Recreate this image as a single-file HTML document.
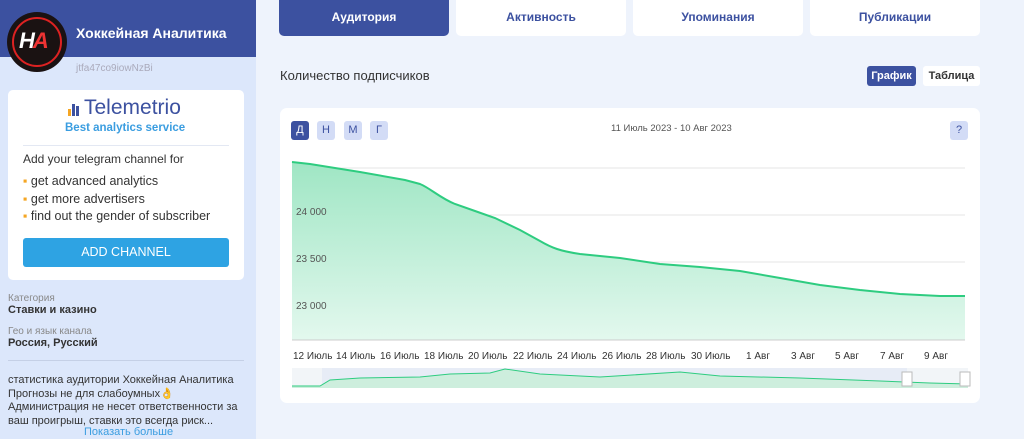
<!DOCTYPE html>
<html><head><meta charset="utf-8"><style>
body{margin:0;width:1024px;height:439px;overflow:hidden;background:#eef3fc;font-family:"Liberation Sans",sans-serif;position:relative}
.sb{position:absolute;left:0;top:0;width:256px;height:439px;background:#dce7fb}
.hd{position:absolute;left:0;top:0;width:256px;height:57px;background:#3c51a0}
.av{position:absolute;left:7px;top:12px;width:60px;height:60px;border-radius:50%;background:#1a1212;border:0}
.av:after{content:"";position:absolute;left:5px;top:5px;width:46px;height:46px;border-radius:50%;border:2px solid #d22}
.av span{position:absolute;left:12px;top:16px;color:#fff;font:italic bold 22px "Liberation Sans";letter-spacing:-2px}
.av span b{color:#e33}
.t{position:absolute;color:#333;font-size:12px}
.card{position:absolute;left:8px;top:90px;width:236px;height:190px;background:#fff;border-radius:5px}
.tab{position:absolute;top:0;height:36px;background:#fff;border-radius:0 0 5px 5px;color:#3c51a0;font-size:12px;font-weight:bold;text-align:center;line-height:34px}
.btn{position:absolute;width:18px;height:19px;border-radius:3px;background:#d3dcf6;color:#3c51a0;font-size:11px;text-align:center;line-height:19px}
</style></head><body>
<div class="sb"></div><div class="hd"></div>
<div class="av"><span>H<b>A</b></span></div>
<div class="t" style="left:76px;top:25px;color:#fff;font-size:14px;font-weight:bold">Хоккейная Аналитика</div>
<div class="t" style="left:76px;top:63px;color:#aab;font-size:10px">jtfa47co9iowNzBi</div>
<div class="card">
<div style="position:absolute;left:60px;top:12px;width:8px;height:14px"><i style="position:absolute;left:0;top:7px;width:3px;height:7px;background:#f5a623"></i><i style="position:absolute;left:4px;top:2px;width:3px;height:12px;background:#3c51a0"></i><i style="position:absolute;left:8px;top:4px;width:3px;height:10px;background:#3c51a0"></i></div>
<div class="t" style="left:76px;top:6px;font-size:21px;color:#3c51a0">Telemetrio</div>
<div class="t" style="left:57px;top:32px;color:#3a9de0;font-weight:bold;font-size:11.5px">Best analytics service</div>
<div style="position:absolute;left:15px;top:55px;width:206px;height:1px;background:#e3e8f3"></div>
<div class="t" style="left:15px;top:62px;font-size:12px">Add your telegram channel for</div>
<div class="t" style="left:15px;top:83px;font-size:12.5px;line-height:17.5px"><span style="color:#f5a623">▪ </span>get advanced analytics<br><span style="color:#f5a623">▪ </span>get more advertisers<br><span style="color:#f5a623">▪ </span>find out the gender of subscriber</div>
<div style="position:absolute;left:15px;top:148px;width:206px;height:29px;background:#2ea3e3;border-radius:3px;color:#fff;font-size:12.5px;text-align:center;line-height:29px">ADD CHANNEL</div>
</div>
<div class="t" style="left:8px;top:293px;color:#888;font-size:10px">Категория</div>
<div class="t" style="left:8px;top:304px;font-weight:bold;font-size:11px">Ставки и казино</div>
<div class="t" style="left:8px;top:326px;color:#888;font-size:10px">Гео и язык канала</div>
<div class="t" style="left:8px;top:337px;font-weight:bold;font-size:11px">Россия, Русский</div>
<div style="position:absolute;left:8px;top:360px;width:236px;height:1px;background:#c5d0e6"></div>
<div class="t" style="left:8px;top:374px;font-size:11px;line-height:13.5px;width:240px">статистика аудитории Хоккейная Аналитика Прогнозы не для слабоумных👌 Администрация не несет ответственности за ваш проигрыш, ставки это всегда риск...</div>
<div class="t" style="left:84px;top:426px;color:#3a9de0;font-size:11px">Показать больше</div>

<div class="tab" style="left:279px;width:170px;background:#3c51a0;color:#fff">Аудитория</div>
<div class="tab" style="left:456px;width:170px">Активность</div>
<div class="tab" style="left:633px;width:170px">Упоминания</div>
<div class="tab" style="left:810px;width:170px">Публикации</div>
<div class="t" style="left:280px;top:68px;font-size:13px">Количество подписчиков</div>
<div style="position:absolute;left:867px;top:66px;width:49px;height:20px;background:#3c51a0;border-radius:3px;color:#fff;font-size:11px;font-weight:bold;text-align:center;line-height:20px">График</div>
<div style="position:absolute;left:923px;top:66px;width:57px;height:20px;background:#fff;border-radius:3px;color:#333;font-size:11px;font-weight:bold;text-align:center;line-height:20px">Таблица</div>

<div style="position:absolute;left:280px;top:108px;width:700px;height:295px;background:#fff;border-radius:7px"></div>
<div class="btn" style="left:291px;top:121px;background:#3c51a0;color:#fff">Д</div>
<div class="btn" style="left:317px;top:121px">Н</div>
<div class="btn" style="left:344px;top:121px">М</div>
<div class="btn" style="left:370px;top:121px">Г</div>
<div class="btn" style="left:950px;top:121px">?</div>
<div class="t" style="left:611px;top:123px;font-size:9.5px;color:#555">11 Июль 2023 - 10 Авг 2023</div>
<svg style="position:absolute;left:0;top:0" width="1024" height="439">
<defs><linearGradient id="g" x1="0" y1="0" x2="0" y2="1"><stop offset="0" stop-color="#9fe6c4"/><stop offset="1" stop-color="#e3f8ee"/></linearGradient></defs>
<g stroke="#e6e6e6"><line x1="292" y1="168" x2="965" y2="168"/><line x1="292" y1="215" x2="965" y2="215"/><line x1="292" y1="262" x2="965" y2="262"/><line x1="292" y1="309" x2="965" y2="309"/></g>
<path d="M292,162 L310,164 L360,172 L405,180 L420,184 C430,188 440,198 455,204 L475,211 L495,218 L520,230 L540,241 C552,248 560,251 580,254 L620,258 L660,264 L700,267 L740,271 L780,278 L820,285 L860,290 L900,294 L940,296 L965,296 L965,340 L292,340Z" fill="url(#g)"/>
<path d="M292,162 L310,164 L360,172 L405,180 L420,184 C430,188 440,198 455,204 L475,211 L495,218 L520,230 L540,241 C552,248 560,251 580,254 L620,258 L660,264 L700,267 L740,271 L780,278 L820,285 L860,290 L900,294 L940,296 L965,296" fill="none" stroke="#2ecc80" stroke-width="2"/>
<line x1="292" y1="340" x2="965" y2="340" stroke="#ccc"/>
<g font-size="10" fill="#555" font-family="Liberation Sans"><text x="296" y="215">24 000</text><text x="296" y="262">23 500</text><text x="296" y="309">23 000</text></g>
<g font-size="10" fill="#333" font-family="Liberation Sans"><text x="293" y="359">12 Июль</text><text x="336" y="359">14 Июль</text><text x="380" y="359">16 Июль</text><text x="424" y="359">18 Июль</text><text x="468" y="359">20 Июль</text><text x="513" y="359">22 Июль</text><text x="557" y="359">24 Июль</text><text x="602" y="359">26 Июль</text><text x="646" y="359">28 Июль</text><text x="691" y="359">30 Июль</text><text x="746" y="359">1 Авг</text><text x="791" y="359">3 Авг</text><text x="835" y="359">5 Авг</text><text x="880" y="359">7 Авг</text><text x="924" y="359">9 Авг</text></g>
<rect x="292" y="368" width="676" height="20" fill="#f2f5f8"/>
<rect x="322" y="368" width="585" height="20" fill="#dfe6f5" opacity=".6"/>
<path d="M292,386 L320,386 L330,380 L360,378 L420,377 L450,374 L490,373 L505,369 L540,374 L600,377 L680,372 L720,376 L800,378 L880,381 L930,383 L968,384 L968,388 L292,388Z" fill="#cdeedd"/>
<path d="M292,386 L320,386 L330,380 L360,378 L420,377 L450,374 L490,373 L505,369 L540,374 L600,377 L680,372 L720,376 L800,378 L880,381 L930,383 L968,384" fill="none" stroke="#2ecc80"/>
<rect x="902" y="372" width="10" height="14" fill="#fff" stroke="#bbb"/><rect x="960" y="372" width="10" height="14" fill="#fff" stroke="#bbb"/>
</svg>
</body></html>
